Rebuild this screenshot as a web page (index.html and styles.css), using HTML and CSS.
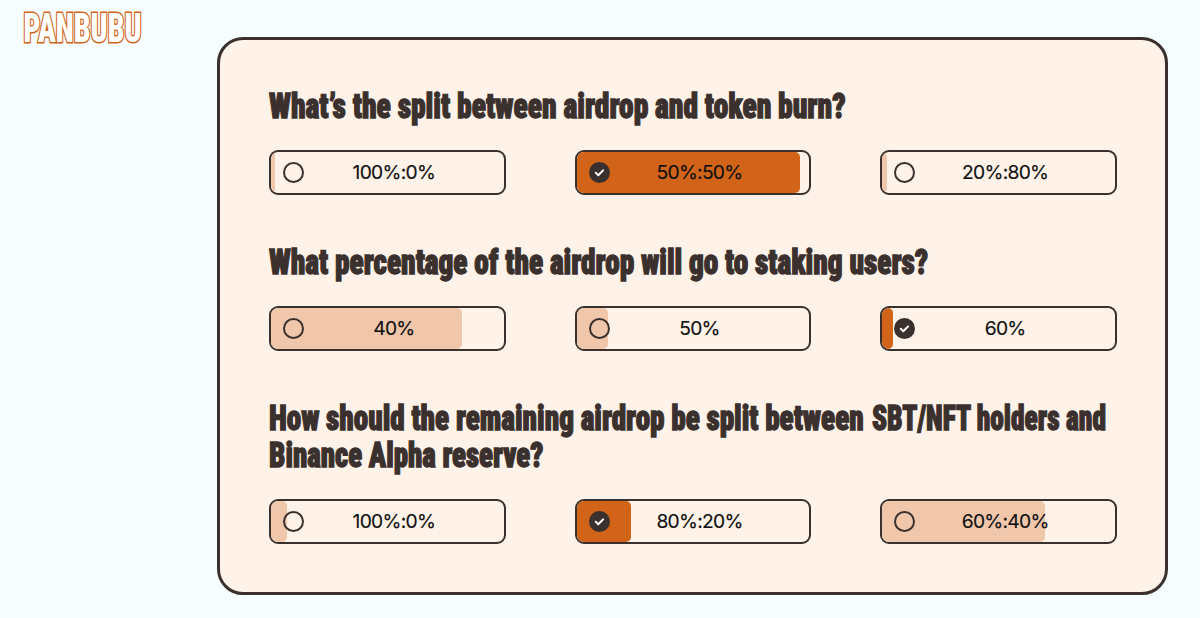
FILE: index.html
```html
<!DOCTYPE html>
<html lang="en">
<head>
  <meta charset="UTF-8" />
  <meta name="viewport" content="width=device-width, initial-scale=1" />
  <title>Panbubu</title>
  <link rel="stylesheet" href="styles.css">
</head>
<body>
  <header class="logo">
    <svg width="130" height="44" viewBox="0 0 130 44">
      <text x="1.5" y="32" textLength="118" lengthAdjust="spacingAndGlyphs">PANBUBU</text>
    </svg>
  </header>

  <main class="card">
    <section class="question">
      <h2 class="title">
        <svg class="title-line"><text x="0" y="30" textLength="769" lengthAdjust="spacingAndGlyphs">What’s the split between airdrop and token burn?</text></svg>
      </h2>
      <div class="options">
        <div class="option">
          <div class="fill" style="width: 1.8%"></div>
          <span class="radio"></span>
          <span class="label">100%:0%</span>
        </div>
        <div class="option selected">
          <div class="fill" style="width: 96%"></div>
          <span class="radio"><svg viewBox="0 0 21 21"><path d="M6.8 10.8l2.5 2.4 4.8-4.8" /></svg></span>
          <span class="label">50%:50%</span>
        </div>
        <div class="option">
          <div class="fill" style="width: 2%"></div>
          <span class="radio"></span>
          <span class="label">20%:80%</span>
        </div>
      </div>
    </section>

    <section class="question">
      <h2 class="title">
        <svg class="title-line"><text x="0" y="30" textLength="879" lengthAdjust="spacingAndGlyphs">What percentage of the airdrop will go to staking users?</text></svg>
      </h2>
      <div class="options">
        <div class="option">
          <div class="fill" style="width: 82%"></div>
          <span class="radio"></span>
          <span class="label">40%</span>
        </div>
        <div class="option">
          <div class="fill" style="width: 13.6%"></div>
          <span class="radio"></span>
          <span class="label">50%</span>
        </div>
        <div class="option selected">
          <div class="fill" style="width: 4.8%"></div>
          <span class="radio"><svg viewBox="0 0 21 21"><path d="M6.8 10.8l2.5 2.4 4.8-4.8" /></svg></span>
          <span class="label">60%</span>
        </div>
      </div>
    </section>

    <section class="question">
      <h2 class="title">
        <svg class="title-line">
          <text x="0" y="30" textLength="793" lengthAdjust="spacingAndGlyphs">How should the remaining airdrop be split between</text>
          <text x="804" y="30" textLength="312" lengthAdjust="spacingAndGlyphs">SBT/NFT holders and</text>
        </svg>
        <svg class="title-line"><text x="0" y="30" textLength="366" lengthAdjust="spacingAndGlyphs">Binance Alpha reserve?</text></svg>
      </h2>
      <div class="options">
        <div class="option">
          <div class="fill" style="width: 7%"></div>
          <span class="radio"></span>
          <span class="label">100%:0%</span>
        </div>
        <div class="option selected">
          <div class="fill" style="width: 23.5%"></div>
          <span class="radio"><svg viewBox="0 0 21 21"><path d="M6.8 10.8l2.5 2.4 4.8-4.8" /></svg></span>
          <span class="label">80%:20%</span>
        </div>
        <div class="option">
          <div class="fill" style="width: 70%"></div>
          <span class="radio"></span>
          <span class="label">60%:40%</span>
        </div>
      </div>
    </section>
  </main>
</body>
</html>
```
FILE: styles.css
```css
body {
  margin: 0;
  height: 618px;
  box-sizing: border-box;
  padding: 10px 32px 0 22px;
  display: flex;
  align-items: flex-start;
  overflow: hidden;
  background-color: #f5fdff;
  font-family: Inter, sans-serif;
}
.logo {
  width: 195px;
  flex: none;
}
.logo svg {
  display: block;
  overflow: visible;
}
.logo text {
  font-family: Roboto, sans-serif;
  font-weight: 900;
  font-stretch: 75%;
  font-size: 41.5px;
  fill: #fff;
  stroke: #d2641a;
  stroke-width: 3px;
  paint-order: stroke;
}
.card {
  flex: 1;
  min-width: 0;
  margin-top: 27px;
  height: 558px;
  box-sizing: border-box;
  padding: 48px 48px 0 49px;
  background-color: #fff3e9;
  border: 3px solid #3a302d;
  border-radius: 26px;
}
.question {
  margin-bottom: 48.5px;
}
.title {
  margin: 0 0 25px;
}
.title-line {
  display: block;
  width: 100%;
  height: 37.3px;
  overflow: visible;
}
/* squeezed to get the narrow poster look */
.title-line text {
  font-family: Roboto, sans-serif;
  font-weight: 900;
  font-stretch: 75%;
  font-size: 35px;
  fill: #3a302d;
  stroke: #3a302d;
  stroke-width: 1.3px;
  transform: scaleX(0.75);
}
.options {
  display: grid;
  grid-template-columns: repeat(3, 1fr);
  gap: 69px;
}
.option {
  position: relative;
  display: flex;
  align-items: center;
  height: 45px;
  box-sizing: border-box;
  padding: 0 20px 0 12px;
  border: 2px solid #3a302d;
  border-radius: 9px;
  overflow: hidden;
}
.fill {
  position: absolute;
  left: 0;
  top: 0;
  bottom: 0;
  background-color: #f1c7ab;
  border-radius: 0 5px 5px 0;
}
.selected .fill {
  background-color: #d2641a;
}
.radio {
  position: relative;
  flex: none;
  width: 21px;
  height: 21px;
  box-sizing: border-box;
  border: 2px solid #3a302d;
  border-radius: 50%;
}
.radio svg {
  display: block;
  width: 21px;
  height: 21px;
  margin: -2px;
  fill: none;
  stroke: #fff;
  stroke-width: 2;
  stroke-linecap: round;
  stroke-linejoin: round;
}
.selected .radio {
  background-color: #3a302d;
}
.label {
  position: relative;
  flex: 1;
  text-align: center;
  font-size: 19.3px;
  line-height: 24px;
  margin-top: -1px;
  letter-spacing: -0.75px;
  color: #111;
  -webkit-text-stroke: 0.15px #111;
}
```
